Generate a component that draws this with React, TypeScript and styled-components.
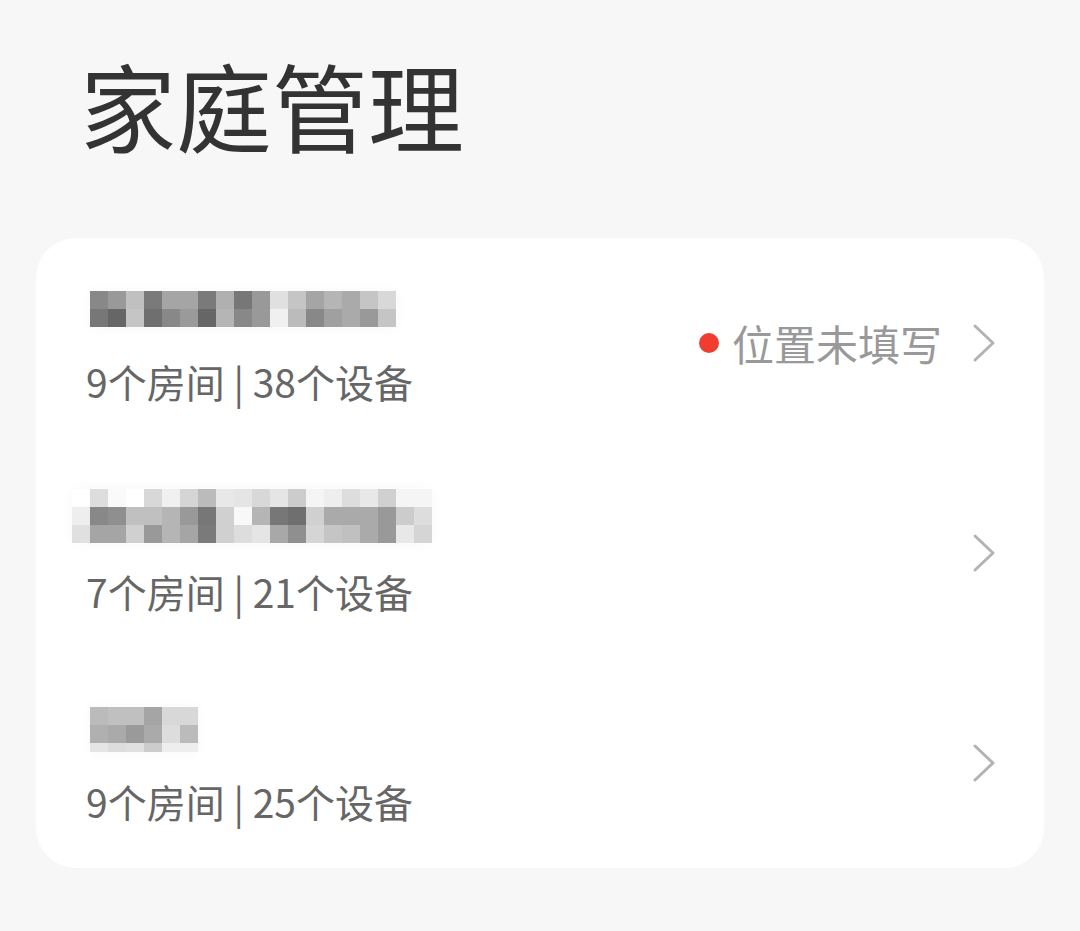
import React from 'react'
import styled, { createGlobalStyle } from 'styled-components'

const GlobalStyle = createGlobalStyle`
  html, body {
    margin: 0;
    padding: 0;
    background: #f7f7f7;
  }
  body {
    font-family: "Noto Sans CJK SC", "Noto Sans", sans-serif;
  }
`

// blurred names, drawn as a mosaic of grey cells
const homes = [
  {
    name: [
      ['#888', '#999', '#c0c0c0', '#7a7a7a', '#a5a5a5', '#a5a5a5', '#7a7a7a', '#b0b0b0', '#777', '#999', '#e0e0e0', '#c5c5c5', '#a5a5a5', '#b5b5b5', '#aaa', '#c5c5c5', '#d8d8d8'],
      ['#777', '#666', '#c5c5c5', '#6f6f6f', '#888', '#9a9a9a', '#666', '#b5b5b5', '#888', '#999', '#f0f0f0', '#bbb', '#888', '#a0a0a0', '#aaa', '#999', '#c5c5c5'],
    ],
    offset: 0,
    drop: 3,
    rooms: 9,
    devices: 38,
    missingLocation: true,
  },
  {
    name: [
      ['#fff', '#ddd', '#fafafa', '#fff', '#d8d8d8', '#f0f0f0', '#d5d5d5', '#bbb', '#e8e8e8', '#e5e5e5', '#d8d8d8', '#e5e5e5', '#ccc', '#f5f5f5', '#eee', '#ddd', '#e8e8e8', '#d0d0d0', '#f5f5f5', '#f5f5f5'],
      ['#eee', '#888', '#8f8f8f', '#c0c0c0', '#c0c0c0', '#b5b5b5', '#999', '#777', '#d0d0d0', '#f8f8f8', '#b5b5b5', '#777', '#6f6f6f', '#d0d0d0', '#aaa', '#aaa', '#aaa', '#999', '#ccc', '#ddd'],
      ['#e0e0e0', '#a5a5a5', '#a5a5a5', '#d0d0d0', '#999', '#b5b5b5', '#a5a5a5', '#7a7a7a', '#d0d0d0', '#ddd', '#e5e5e5', '#a8a8a8', '#8f8f8f', '#d5d5d5', '#c5c5c5', '#c0c0c0', '#aaa', '#999', '#e8e8e8', '#d5d5d5'],
    ],
    offset: -18,
    drop: 0,
    rooms: 7,
    devices: 21,
    missingLocation: false,
  },
  {
    name: [
      ['#bbb', '#c0c0c0', '#c0c0c0', '#a5a5a5', '#d8d8d8', '#d8d8d8'],
      ['#b0b0b0', '#aaa', '#9a9a9a', '#aaa', '#ddd', '#bbb'],
      ['#e5e5e5', '#ddd', '#e0e0e0', '#ccc', '#eee', '#eee'],
    ],
    offset: 0,
    drop: 3,
    rooms: 9,
    devices: 25,
    missingLocation: false,
  },
]

const App = () => {
  return (
    <Page>
      <GlobalStyle />
      <Title>家庭管理</Title>
      <Card>
        {homes.map((home, i) => (
          <Row key={i}>
            <Info>
              <NameSlot>
                <Mosaic $shift={home.offset} $drop={home.drop}>
                  {home.name.map((line, r) => (
                    <MosaicLine key={r}>
                      {line.map((c, k) => (
                        <Cell key={k} $color={c} $last={r === 2 && i === 2} />
                      ))}
                    </MosaicLine>
                  ))}
                </Mosaic>
              </NameSlot>
              <Stats>
                {home.rooms}个房间 | {home.devices}个设备
              </Stats>
            </Info>
            <Trail>
              {home.missingLocation && (
                <Warning>
                  <Dot />
                  <WarningText>位置未填写</WarningText>
                </Warning>
              )}
              <Chevron viewBox="0 0 24 40">
                <path d="M3 3 L21 20 L3 37" />
              </Chevron>
            </Trail>
          </Row>
        ))}
      </Card>
    </Page>
  )
}

const Page = styled.div`
  padding: 56px 36px 64px;
`

const Title = styled.h1`
  margin: 0 0 86px 44px;
  font-size: 96px;
  line-height: 96px;
  font-weight: 400;
  color: #333;
  letter-spacing: 0;
`

const Card = styled.div`
  background: #fff;
  border-radius: 40px;
  overflow: hidden;
`

const Row = styled.div`
  height: 210px;
  display: flex;
  align-items: center;
  justify-content: space-between;
  padding: 0 48px 0 50px;
  box-sizing: border-box;
`

const Info = styled.div`
  display: flex;
  flex-direction: column;
`

const NameSlot = styled.div`
  height: 54px;
  display: flex;
  align-items: center;
`

const Mosaic = styled.div<{ $shift: number; $drop: number }>`
  display: flex;
  flex-direction: column;
  margin-left: ${(p) => 4 + p.$shift}px;
  margin-top: ${(p) => p.$drop * 2}px;
  box-shadow: 0 0 10px 4px rgba(0, 0, 0, 0.02);
  border-radius: 8px;
`

const MosaicLine = styled.div`
  display: flex;
`

const Cell = styled.div<{ $color: string; $last?: boolean }>`
  width: 18px;
  height: ${(p) => (p.$last ? 9 : 18)}px;
  background: ${(p) => p.$color};
`

const Stats = styled.div`
  margin-top: 22px;
  font-size: 39px;
  line-height: 52px;
  color: #666;
`

const Trail = styled.div`
  display: flex;
  align-items: center;
`

const Warning = styled.div`
  display: flex;
  align-items: center;
  margin-right: 30px;
`

const Dot = styled.span`
  width: 20px;
  height: 20px;
  border-radius: 50%;
  background: #f03d30;
  margin-right: 13px;
`

const WarningText = styled.span`
  font-size: 42px;
  line-height: 52px;
  color: #999;
`

const Chevron = styled.svg`
  width: 24px;
  height: 40px;
  fill: none;
  stroke: #b3b3b3;
  stroke-width: 3;
  stroke-linecap: round;
  stroke-linejoin: round;
`

export default App
